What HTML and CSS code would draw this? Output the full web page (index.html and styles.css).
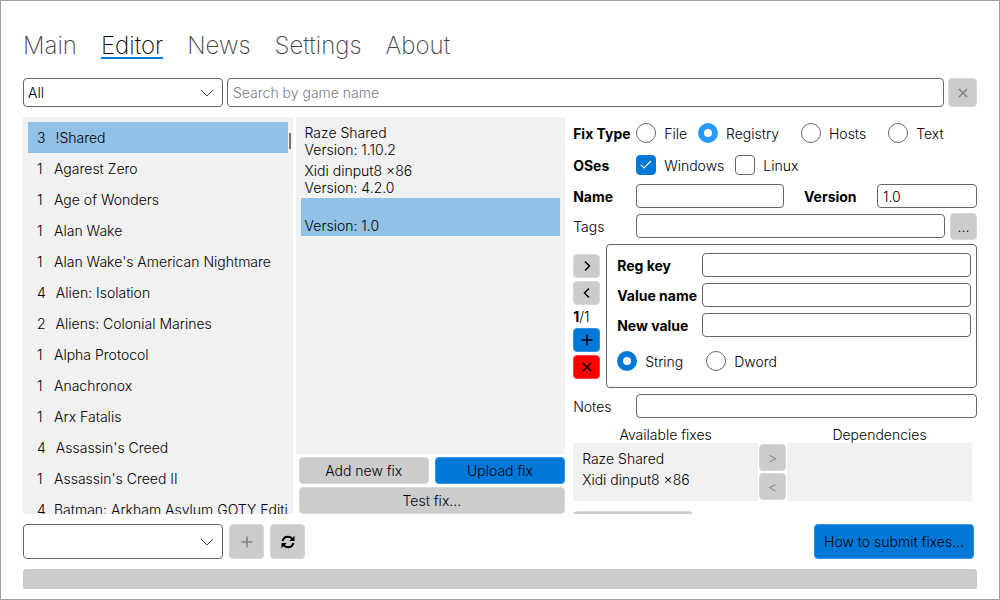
FILE: index.html
```html
<!DOCTYPE html>
<html lang="en">
<head>
<meta charset="utf-8">
<title>Editor</title>
<link rel="stylesheet" href="styles.css">
</head>
<body>
<div class="window">
  <nav class="tabs">
    <a href="#main">Main</a>
    <a href="#editor" class="active" aria-current="page">Editor</a>
    <a href="#news">News</a>
    <a href="#settings">Settings</a>
    <a href="#about">About</a>
  </nav>

  <div class="search-row">
    <select class="select" aria-label="Filter"><option>All</option></select>
    <input class="field search" type="text" placeholder="Search by game name" aria-label="Search by game name">
    <button class="btn square" disabled aria-label="Clear search"><svg width="10" height="10" viewBox="0 0 10 10"><path d="M1 1L9 9M9 1L1 9"/></svg></button>
  </div>

  <main class="panels">
    <section class="games">
      <ul class="list game-list">
        <li class="selected"><span>3</span>!Shared</li>
        <li><span>1</span>Agarest Zero</li>
        <li><span>1</span>Age of Wonders</li>
        <li><span>1</span>Alan Wake</li>
        <li><span>1</span>Alan Wake's American Nightmare</li>
        <li><span>4</span>Alien: Isolation</li>
        <li><span>2</span>Aliens: Colonial Marines</li>
        <li><span>1</span>Alpha Protocol</li>
        <li><span>1</span>Anachronox</li>
        <li><span>1</span>Arx Fatalis</li>
        <li><span>4</span>Assassin's Creed</li>
        <li><span>1</span>Assassin's Creed II</li>
        <li><span>4</span>Batman: Arkham Asylum GOTY Edition</li>
      </ul>
      <div class="thumb"></div>
    </section>

    <section class="fixes">
      <ul class="list fix-list">
        <li><div>Raze Shared</div><div>Version: 1.10.2</div></li>
        <li><div>Xidi dinput8 ×86</div><div>Version: 4.2.0</div></li>
        <li class="selected"><div></div><div>Version: 1.0</div></li>
      </ul>
      <div class="fix-actions">
        <button class="btn">Add new fix</button>
        <button class="btn primary">Upload fix</button>
        <button class="btn wide">Test fix...</button>
      </div>
    </section>

    <section class="form">
      <div class="row choices" role="radiogroup" aria-labelledby="fix-type">
        <b class="label" id="fix-type">Fix Type</b>
        <label class="choice"><input type="radio" name="type">File</label>
        <label class="choice roomy hovered"><input type="radio" name="type" checked>Registry</label>
        <label class="choice roomy"><input type="radio" name="type">Hosts</label>
        <label class="choice"><input type="radio" name="type">Text</label>
      </div>
      <div class="row choices" role="group" aria-labelledby="oses">
        <b class="label" id="oses">OSes</b>
        <label class="choice"><input type="checkbox" checked>Windows</label>
        <label class="choice"><input type="checkbox">Linux</label>
      </div>
      <div class="row">
        <label class="label bold" for="name">Name</label>
        <input class="field" id="name" type="text">
        <label class="version-label bold" for="version">Version</label>
        <input class="field version" id="version" type="text" value="1.0">
      </div>
      <div class="row">
        <label class="label" for="tags">Tags</label>
        <input class="field" id="tags" type="text">
        <button class="btn more" aria-label="Edit tags">...</button>
      </div>

      <div class="entry">
        <div class="side">
          <button class="btn" aria-label="Next"><svg width="14" height="14" viewBox="0 0 14 14"><path d="M5 2.500L9.500 7L5 11.500"/></svg></button>
          <button class="btn" aria-label="Previous"><svg width="14" height="14" viewBox="0 0 14 14"><path d="M9 2.500L4.500 7L9 11.500"/></svg></button>
          <div class="count"><b>1</b>/1</div>
          <button class="btn primary" aria-label="Add"><svg width="14" height="14" viewBox="0 0 14 14"><path d="M7 1.500V12.500M1.500 7H12.500"/></svg></button>
          <button class="btn danger" aria-label="Delete"><svg width="14" height="14" viewBox="0 0 14 14"><path d="M3 3L11 11M11 3L3 11"/></svg></button>
        </div>
        <div class="box">
          <label class="bold" for="key">Reg key</label>
          <input class="field" id="key" type="text">
          <label class="bold" for="value-name">Value name</label>
          <input class="field" id="value-name" type="text">
          <label class="bold" for="new-value">New value</label>
          <input class="field" id="new-value" type="text">
          <div class="choices kinds">
            <label class="choice"><input type="radio" name="kind" checked>String</label>
            <label class="choice"><input type="radio" name="kind">Dword</label>
          </div>
        </div>
      </div>

      <div class="row">
        <label class="label" for="notes">Notes</label>
        <input class="field" id="notes" type="text">
      </div>

      <div class="transfer">
        <div class="caption">Available fixes</div>
        <div class="caption last">Dependencies</div>
        <ul class="list dep-list">
          <li>Raze Shared</li>
          <li>Xidi dinput8 ×86</li>
        </ul>
        <div class="movers">
          <button class="btn" disabled>&gt;</button>
          <button class="btn" disabled>&lt;</button>
        </div>
        <ul class="list dep-list"></ul>
      </div>
      <button class="btn save" aria-label="Save"></button>
    </section>
  </main>

  <footer class="footer">
    <select class="select" aria-label="New game"><option></option></select>
    <button class="btn tool" disabled aria-label="Add game"><svg width="14" height="14" viewBox="0 0 14 14"><path d="M7 1.500V12.500M1.500 7H12.500"/></svg></button>
    <button class="btn tool" aria-label="Refresh"><svg class="refresh" width="14" height="14" viewBox="0 0 14 14"><path class="arc" d="M1.600 6C2.300 3 4.400 1.800 7 1.800C8.900 1.800 10.300 2.600 11.300 3.800M12.400 8C11.700 11 9.600 12.200 7 12.200C5.100 12.200 3.700 11.400 2.700 10.200"/><path class="head" d="M13.500 .8V6H8.300ZM.5 13.200V8H5.700Z"/></svg></button>
    <button class="btn primary help">How to submit fixes...</button>
  </footer>
  <progress class="progress" value="0" max="100" aria-label="Progress"></progress>
</div>
</body>
</html>
```
FILE: styles.css
```css
* { box-sizing: border-box; }

body {
  margin: 0;
  font: 300 14px/17px Inter, "Liberation Sans", sans-serif;
  color: #000;
  background: #fff;
}

input, select, button { font: inherit; color: inherit; margin: 0; }
ul { list-style: none; margin: 0; padding: 0; }
b, .bold { font-weight: 700; }

.window {
  height: 100vh;
  display: flex;
  flex-direction: column;
  gap: 10px;
  padding: 29px 22px 10px;
  border: 1px solid #a0a0a0;
}

.tabs { display: flex; gap: 24px; height: 38px; }
.tabs a {
  height: 29px;
  font-size: 24px;
  line-height: 32px;
  font-weight: 200;
  color: #444;
  text-decoration: none;
}
.tabs .active { color: #000; border-bottom: 2px solid #0078d7; }

.field {
  flex: 1;
  min-width: 0;
  height: 24px;
  padding: 0 5px;
  border: 1px solid #666;
  border-radius: 4px;
  background: #fff;
  outline: none;
}
.field::placeholder { color: #808080; opacity: 1; }

.select {
  appearance: none;
  width: 200px;
  padding: 0 4px;
  border: 1px solid #666;
  border-radius: 4px;
  background: #fff url("data:image/svg+xml,%3Csvg xmlns='http://www.w3.org/2000/svg' width='14' height='8'%3E%3Cpath d='M1 1L7 7L13 1' fill='none' stroke='%23444'/%3E%3C/svg%3E") no-repeat right 8px center;
}

.btn {
  display: flex;
  align-items: center;
  justify-content: center;
  padding: 0;
  border: 1px solid #d8d8d8;
  border-radius: 4px;
  background: #ccc;
}
.btn svg { fill: none; stroke: currentColor; stroke-width: 1.5; }
.btn:disabled { color: #808080; }
.primary { background: #0078d7; border-color: #2e90de; }
.danger { background: #f00; border-color: #ff3c3c; }

.search-row { display: flex; gap: 4px; height: 29px; }
.search { height: 29px; }
.square { width: 29px; }

.panels {
  flex: 1;
  min-height: 0;
  display: grid;
  grid-template-columns: 2fr 2fr 3fr;
  grid-template-rows: minmax(0, 1fr);
}

.list { background: #f1f1f1; padding: 5px; }
.selected { background: #92c1e8; }

.games { position: relative; margin-right: 3px; min-width: 0; }
.game-list { height: 100%; overflow: hidden; }
.game-list li {
  display: flex;
  gap: 10px;
  padding: 7px 0 7px 9px;
  white-space: nowrap;
  overflow: hidden;
}
.game-list span { min-width: 7px; }
.thumb { position: absolute; top: 16px; right: 2px; width: 2px; height: 16px; background: #777; }

.fixes { display: flex; flex-direction: column; gap: 3px; margin-right: 3px; }
.fix-list { flex: 1; }
.fix-list li { padding: 2px 4px; }
.fix-list li div { min-height: 17px; }
.fix-actions { display: grid; grid-template-columns: 1fr 1fr; gap: 3px 6px; margin-left: 3px; }
.fix-actions .btn { height: 27px; }
.wide { grid-column: 1 / -1; }

.form { margin-left: 5px; overflow: hidden; }
.row { display: flex; align-items: center; height: 30px; }
.label { width: 63px; flex: none; }
.version-label { width: 93px; padding-left: 20px; }
.version { flex: 0 0 100px; }
.more { width: 27px; height: 27px; margin-left: 5px; }

.choices { display: flex; align-items: center; height: 32px; }
.choice { display: flex; align-items: center; gap: 8px; margin-right: 11px; }
.roomy { margin-right: 22px; }
.choice input {
  appearance: none;
  width: 20px;
  height: 20px;
  border: 1px solid #666;
  background: #fff;
}
.choice input[type="radio"] { border-radius: 50%; }
.choice input[type="radio"]:checked { border: 6px solid #0078d7; }
.hovered input[type="radio"]:checked { border-color: #2899ff; }
.choice input[type="checkbox"] { border-radius: 4px; }
.choice input[type="checkbox"]:checked {
  border-color: #0078d7;
  background: #0078d7 url("data:image/svg+xml,%3Csvg xmlns='http://www.w3.org/2000/svg' width='12' height='10'%3E%3Cpath d='M1 5L4 8L11 1' fill='none' stroke='white' stroke-width='1.2'/%3E%3C/svg%3E") no-repeat center;
}

.entry { display: flex; align-items: center; gap: 6px; margin: 3px 0; }
.side { display: flex; flex-direction: column; gap: 3px; width: 27px; }
.side .btn { height: 24px; }
.box {
  flex: 1;
  display: grid;
  grid-template-columns: 79px 1fr;
  align-items: center;
  gap: 6px;
  padding: 8px 5px 8px 10px;
  border: 1px solid #666;
  border-radius: 4px;
}
.box label { white-space: nowrap; }
.kinds { grid-column: 1 / -1; height: 36px; gap: 12px; }

.transfer {
  display: grid;
  grid-template-columns: 1fr 27px 1fr;
  column-gap: 1px;
  padding: 5px 5px 0 0;
}
.caption { text-align: center; }
.last { grid-column: 3; }
.dep-list { height: 58px; }
.dep-list li { padding: 2px 4px; }
.movers { display: flex; flex-direction: column; justify-content: center; gap: 2px; }
.movers .btn { height: 27px; }
.save { width: 120px; height: 27px; margin-top: 10px; }

.footer { display: flex; gap: 6px; height: 35px; }
.tool { width: 35px; }
.refresh .arc { stroke-width: 2; }
.refresh .head { fill: #000; stroke: none; }
.help { margin: 0 3px 0 auto; padding: 0 9px; }

.progress {
  appearance: none;
  width: 100%;
  height: 20px;
  border: 0;
  border-radius: 4px;
  background: #ccc;
}
.progress::-webkit-progress-bar { background: #ccc; border-radius: 4px; }
.progress::-webkit-progress-value { background: #0078d7; }
```
